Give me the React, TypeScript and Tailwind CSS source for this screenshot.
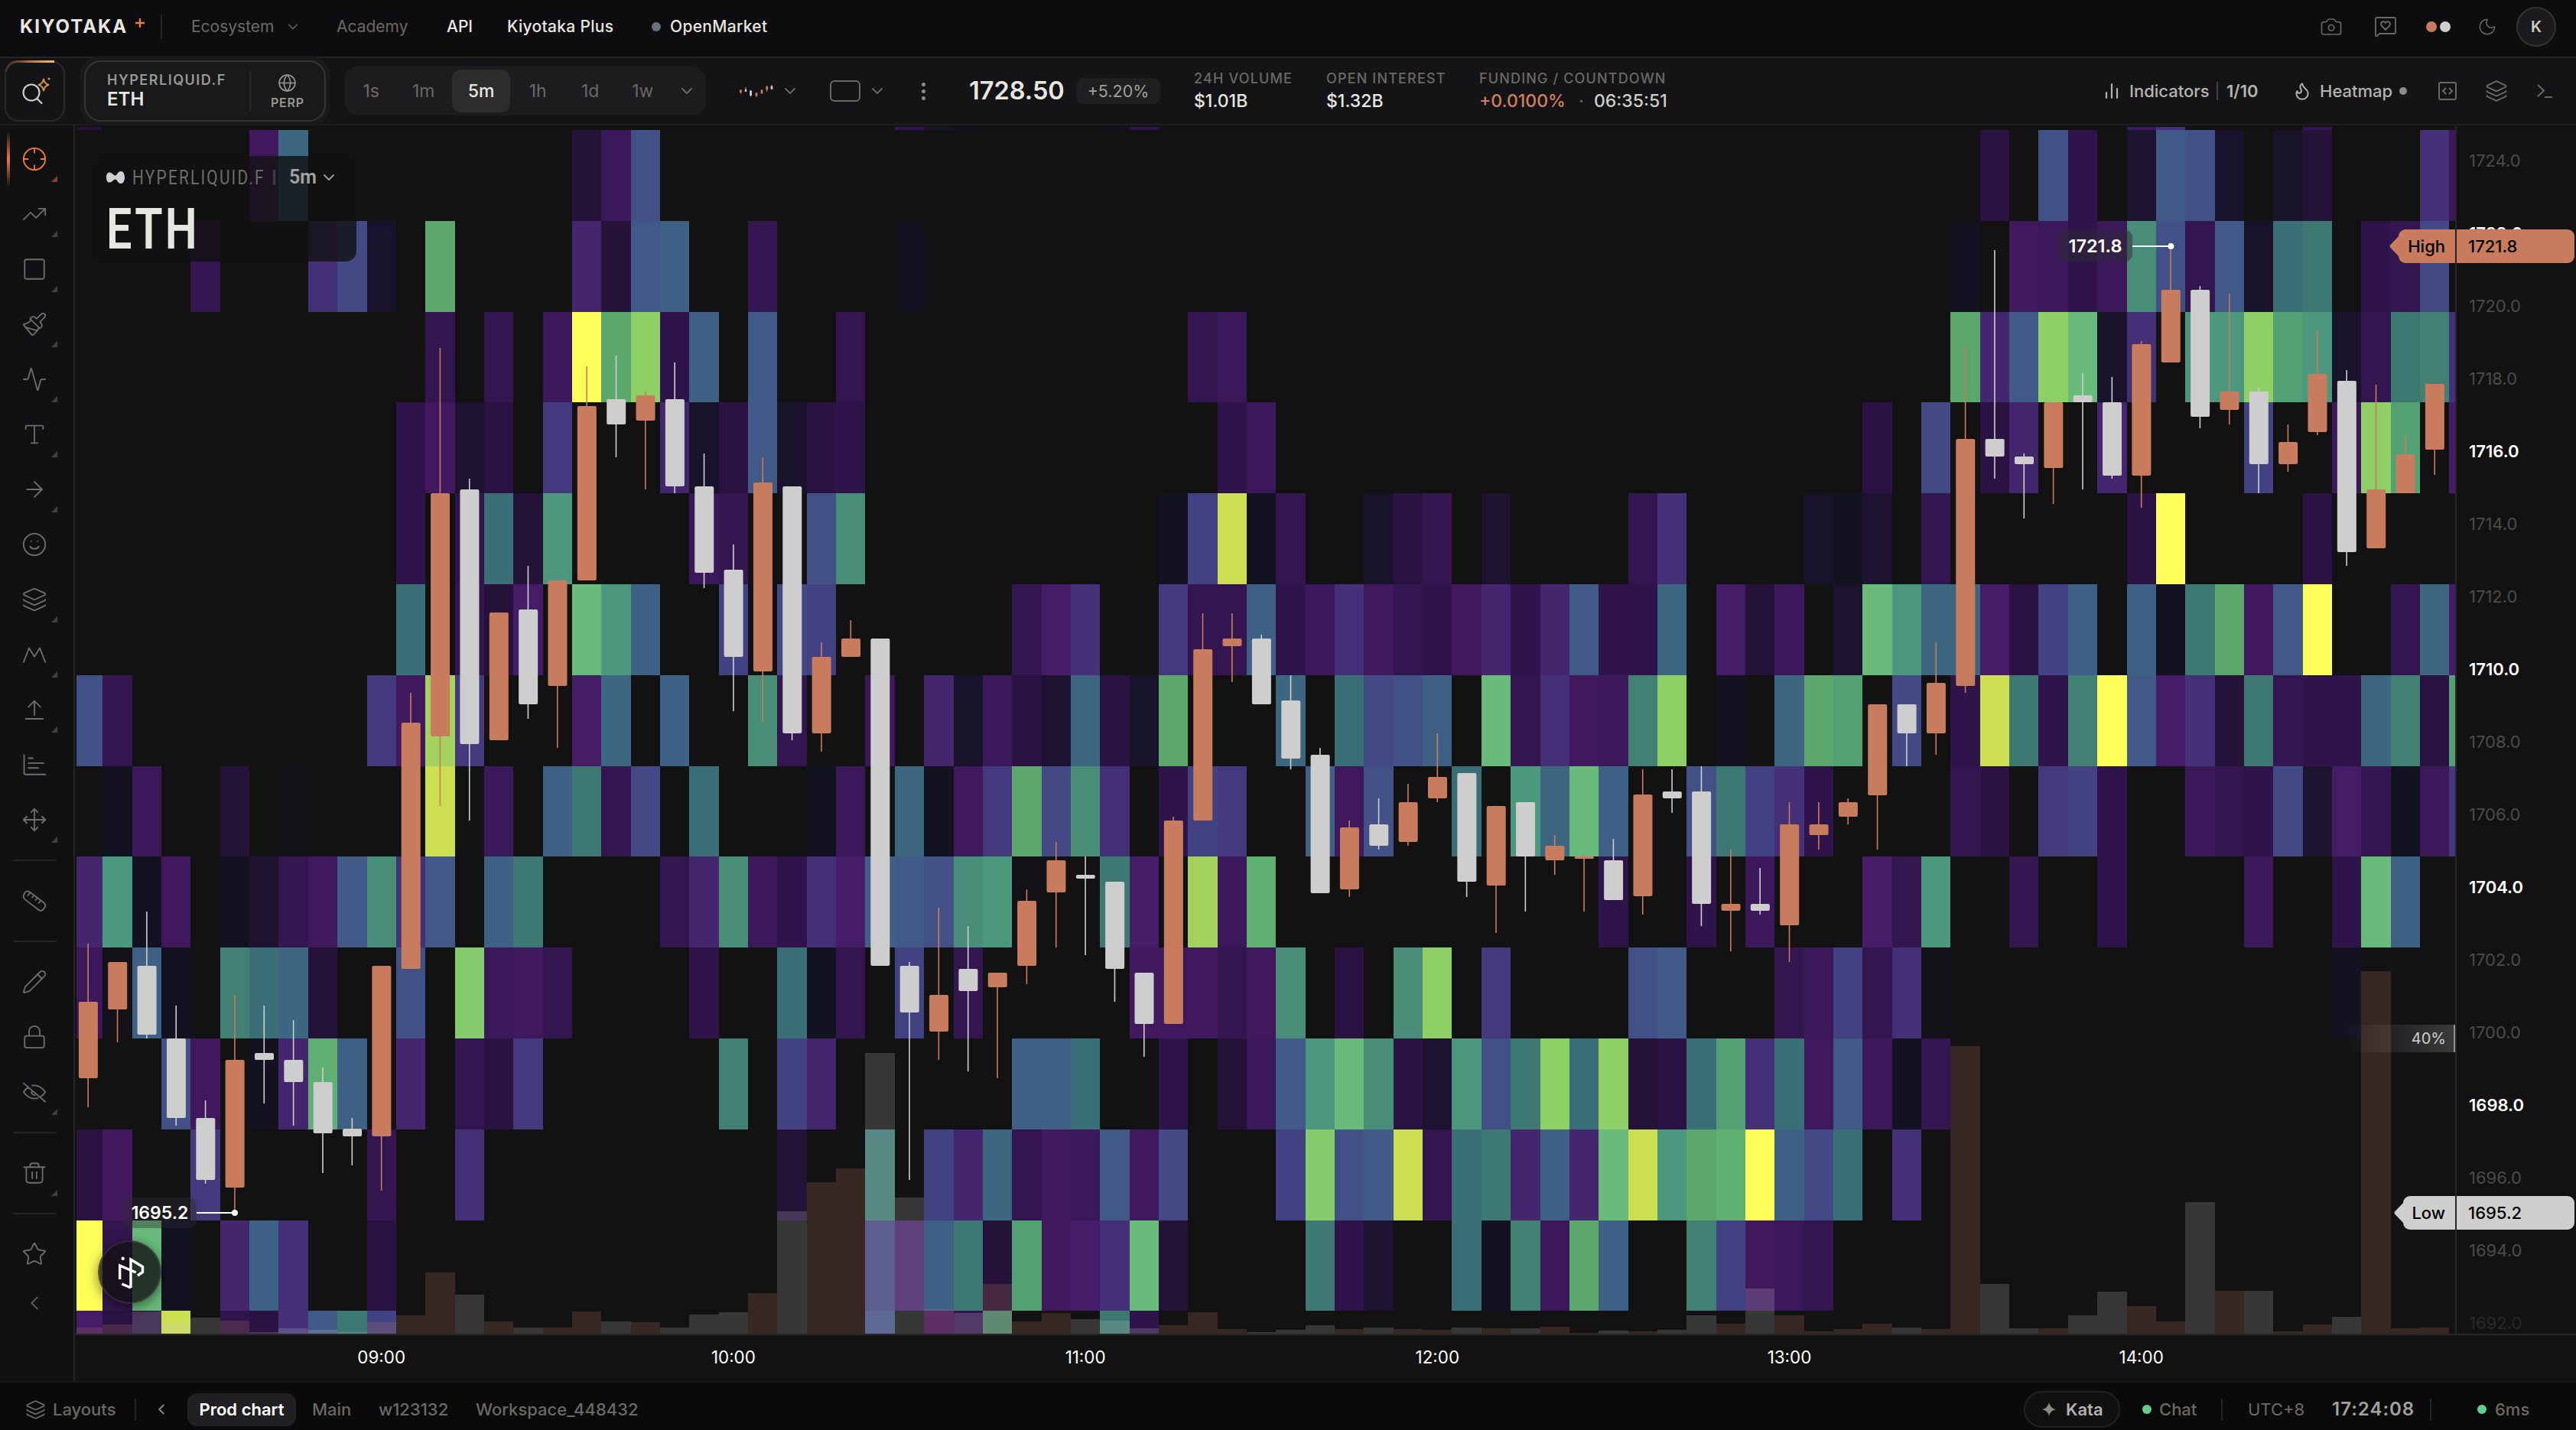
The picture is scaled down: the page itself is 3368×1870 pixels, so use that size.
import type { ReactNode } from 'react';
import {
  Activity,
  ArrowRight,
  Camera,
  ChevronDown,
  ChevronLeft,
  Crosshair,
  Flame,
  Globe,
  Layers,
  Lock,
  Moon,
  Move,
  Paintbrush,
  Pencil,
  Smile,
  Square,
  Star,
  TrendingUp,
  Type,
} from 'lucide-react';

// ---------- chart data ----------

const COL = 38.35;
const LEFT = 96;
const BOTTOM = 1744;

const colX = (i: number) => Math.round(LEFT + COL * i);
const midX = (i: number) => 115.2 + COL * i;
const priceY = (price: number) => 209.5 + (1724 - price) * 47.53;

// heatmap intensity, from the weakest to the strongest
const HEAT: Record<string, string> = {
  '-': '#131219', a: '#131221', b: '#18122a', c: '#1d1230', d: '#241239', e: '#2a1343', f: '#2e144a', g: '#33164f',
  h: '#3b185a', i: '#40185e', j: '#441c68', k: '#44266f', l: '#443077', m: '#43397c', n: '#424181', o: '#424984',
  p: '#415185', q: '#405986', r: '#3e6084', s: '#3d6780', t: '#3b6f77', u: '#3d7872', v: '#428074', w: '#478d78',
  x: '#4c987e', y: '#54a075', z: '#5ca76c', A: '#60b074', B: '#69bb7b', C: '#84cb6b', D: '#8fd066', E: '#a4d25e',
  F: '#cbdf50', G: '#ffff5a',
};

// each row: start column followed by one letter per column
const HEAT_ROWS: [number, number, string][] = [
  [166, 170, '0d 28gba 35af 70il 76g'],
  [170, 289, '6is 17dhp 65e 67pf 70cqpb.bd 80lh'],
  [289, 408, '4g 8lob.z 17kdqr 23g 28a 64a.ihfhwpgqbtu.fgo'],
  [408, 526, '12g.g.hGzDfr.q..g 38gh 64zkqDBbl.xxDyxbguvl'],
  [526, 645, '11fice.m...kbeqbef 39fh 61e.o.ek..k....n..hDy.j'],
  [645, 764, '11f.ftdx....hg..pw 37anFag..beg.c....gl....bac.g......eG....e'],
  [764, 883, '11t.gdj.Bxr..n.on 32gjl..mggrfhligfikfkqffs.jdh.cBxssjenr.rauziqG..gsj'],
  [883, 1002, '0pg 10miEm...js.r..wg..h.kbhecsebz...s.topr.BglihvD.a.szy.o.fFufvGqjldugffsvey'],
  [1002, 1120, '1ah..d.-....F.h.rugo.t...ah.saimzowl.fnm..rip..t.xsBr..punlf....ge.mnf..hgfocjgahm'],
  [1120, 1239, '0kxai.acgiqwlq.ru....gkwhfljrqpwx-..uj.EhA 52f..f.h...jgx..g..f....h..fBr'],
  [1239, 1358, '0h-ra.vtsd..p.Chig....f..tag.n.g.....iiigiw.e.wD.m....pq...ghngl- 77a'],
  [1358, 1477, '3pi.akAr.k.gem......v.nk......rrt..f.dhqxBwecxpuDtDdetyltiqhag'],
  [1477, 1596, '0ei..m.....g..l 24d..u.nksgihqio...nCpqFgtukrkBFxzAGrot.l'],
  [1596, 1714, '0GgBa.krl..e 27njrudyijlBd....ufc..tavhzr..vnihg'],
  [1714, 1744, '0jeeF.felqun 27p.jgw...uf'],
];

// [direction, high, body top, body bottom, low, top of the volume bar], in chart pixels
type Candle = ['u' | 'd', number, number, number, number, number];

const CANDLES: Candle[] = [
  ['u', 1234, 1310, 1410, 1448, 1736], ['u', 1258, 1258, 1320, 1363, 1732], ['d', 1192, 1263, 1353, 1358, 1715],
  ['d', 1315, 1358, 1462, 1472, 1730], ['d', 1439, 1462, 1543, 1548, 1723], ['u', 1301, 1386, 1553, 1586, 1727],
  ['d', 1315, 1377, 1386, 1443, 1742], ['d', 1334, 1386, 1415, 1472, 1737], ['d', 1396, 1415, 1482, 1534, 1739],
  ['d', 1462, 1476, 1486, 1524, 1742], ['u', 1263, 1263, 1486, 1557, 1729], ['u', 906, 945, 1267, 1267, 1720],
  ['u', 455, 645, 963, 1054, 1664], ['d', 626, 640, 973, 1073, 1693], ['u', 801, 801, 968, 968, 1728],
  ['d', 740, 797, 921, 940, 1736], ['u', 759, 759, 897, 978, 1736], ['u', 479, 531, 759, 759, 1715],
  ['d', 465, 522, 555, 598, 1728], ['u', 512, 517, 550, 640, 1729], ['d', 474, 522, 636, 645, 1736],
  ['d', 593, 636, 749, 769, 1719], ['d', 712, 745, 859, 930, 1716], ['u', 598, 631, 878, 944, 1691],
  ['d', 636, 636, 959, 968, 1584], ['u', 840, 859, 959, 983, 1546], ['u', 811, 835, 859, 859, 1528],
  ['d', 835, 835, 1263, 1263, 1377], ['d', 1258, 1263, 1324, 1543, 1566], ['u', 1187, 1301, 1349, 1386, 1712],
  ['d', 1211, 1267, 1296, 1401, 1717], ['u', 1272, 1272, 1291, 1410, 1679], ['u', 1163, 1178, 1263, 1287, 1728],
  ['u', 1101, 1125, 1167, 1239, 1717], ['d', 1120, 1144, 1149, 1249, 1725], ['d', 1153, 1153, 1267, 1310, 1727],
  ['d', 1272, 1272, 1339, 1382, 1737], ['u', 1068, 1073, 1339, 1339, 1733], ['u', 802, 849, 1073, 1073, 1716],
  ['u', 802, 835, 845, 892, 1738], ['d', 830, 835, 921, 921, 1742], ['d', 883, 916, 992, 1006, 1739],
  ['d', 978, 987, 1168, 1168, 1733], ['u', 1073, 1082, 1163, 1173, 1738], ['d', 1044, 1078, 1106, 1111, 1736],
  ['u', 1025, 1049, 1101, 1106, 1738], ['u', 959, 1016, 1044, 1049, 1739], ['d', 1011, 1011, 1153, 1173, 1736],
  ['u', 1054, 1054, 1158, 1220, 1737], ['d', 1049, 1049, 1120, 1192, 1737], ['u', 1092, 1106, 1125, 1144, 1735],
  ['u', 1118, 1120, 1123, 1192, 1743], ['d', 1097, 1125, 1177, 1177, 1740], ['u', 1006, 1039, 1172, 1196, 1741],
  ['d', 1006, 1035, 1044, 1063, 1739], ['d', 1002, 1035, 1182, 1211, 1720], ['u', 1111, 1182, 1191, 1244, 1731],
  ['d', 1135, 1182, 1191, 1196, 1685], ['u', 1049, 1078, 1210, 1258, 1720], ['u', 1049, 1078, 1092, 1111, 1741],
  ['u', 1044, 1049, 1068, 1078, 1738], ['u', 921, 921, 1040, 1111, 1731], ['d', 921, 921, 959, 1002, 1736],
  ['u', 840, 893, 959, 987, 1738], ['u', 454, 574, 897, 906, 1368], ['d', 327, 574, 597, 626, 1679],
  ['d', 593, 597, 607, 678, 1737], ['u', 526, 526, 612, 659, 1737], ['d', 488, 517, 526, 640, 1720],
  ['d', 493, 526, 622, 626, 1689], ['u', 446, 450, 622, 664, 1708], ['u', 322, 379, 474, 474, 1728],
  ['d', 374, 379, 545, 560, 1572], ['u', 384, 512, 536, 555, 1688], ['d', 507, 512, 607, 645, 1688],
  ['u', 555, 578, 607, 617, 1741], ['u', 431, 489, 565, 569, 1732], ['d', 484, 498, 722, 740, 1722],
  ['u', 503, 640, 717, 717, 1270], ['u', 569, 594, 645, 645, 1737], ['u', 502, 502, 588, 621, 1736],
];

const PRICES = [1724, 1722, 1720, 1718, 1716, 1714, 1712, 1710, 1708, 1706, 1704, 1702, 1700, 1698, 1696, 1694, 1692];
const HOURS = ['09:00', '10:00', '11:00', '12:00', '13:00', '14:00'];

const heatCells = HEAT_ROWS.flatMap(([top, bottom, row]) =>
  row.split(' ').flatMap((run) => {
    const start = parseInt(run, 10);
    const letters = run.replace(/^\d+/, '');
    return [...letters].map((letter, i) => ({ top, bottom, col: start + i, letter })).filter((c) => c.letter !== '.');
  }),
);

// ---------- chart ----------

const priceColor = (price: number) => {
  if (price === 1692) return '#29292a';
  return (price - 1692) % 6 === 0 ? '#ffffff' : '#4b4b4c';
};

const ChartCanvas = () => (
  <svg className="block h-[1642px] w-[3270px]" viewBox="98 164 3270 1642" fontFamily="Inter, sans-serif">
    {heatCells.map(({ top, bottom, col, letter }) => {
      const x = Math.max(colX(col), 100);
      const right = Math.min(colX(col + 1), 3210);
      return (
        <rect
          key={`${top}-${col}`}
          x={x}
          y={top}
          width={right - x}
          height={bottom - top}
          fill={HEAT[letter]}
          shapeRendering="crispEdges"
        />
      );
    })}

    {/* Volume */}
    {CANDLES.map(([dir, , , , , top], i) => {
      const x = Math.max(colX(i), 100);
      return (
        <rect
          key={i}
          x={x}
          y={top}
          width={colX(i + 1) - x}
          height={BOTTOM - top}
          fill={dir === 'u' ? '#c97c5d' : '#cecece'}
          fillOpacity={0.2}
        />
      );
    })}

    {/* Candles */}
    {CANDLES.map(([dir, high, top, bottom, low], i) => {
      const color = dir === 'u' ? '#c97c5d' : '#cecece';
      return (
        <g key={i} fill={color}>
          <rect x={midX(i) - 0.8} y={high} width={1.6} height={low - high} />
          <rect x={midX(i) - 12.3} y={top} width={25} height={bottom - top} rx={bottom - top > 4 ? 2 : 1} />
        </g>
      );
    })}

    {/* Extremes */}
    <g stroke="#ffffff" strokeWidth={2} fill="#ffffff">
      <path d="M2788 322H2838M257 1586H307" />
      <circle cx={2838.4} cy={322} r={3} />
      <circle cx={307} cy={1586} r={3} />
    </g>

    {/* Axes */}
    <path d="M3211 166V1745M98 1745H3368" stroke="#262628" strokeWidth={2} fill="none" />
    {PRICES.map((price) => (
      <text
        key={price}
        x={3228}
        y={priceY(price) + 8}
        fontSize={22}
        fontWeight={priceColor(price) === '#ffffff' || price === 1722 ? 600 : 400}
        fill={price === 1722 ? '#ffffff' : priceColor(price)}
      >
        {price.toFixed(1)}
      </text>
    ))}
    {HOURS.map((hour, i) => (
      <text key={hour} x={498.7 + i * COL * 12} y={1783} fontSize={22.4} fontWeight={400} fill="#ffffff" textAnchor="middle">
        {hour}
      </text>
    ))}
  </svg>
);

const ChartLegend = () => (
  <div className="absolute left-[27px] top-[40px] h-[138px] w-[341px] rounded-[14px] bg-[#121213]/80 pl-[14px] pt-[12px] font-['Roboto',sans-serif]">
    <div className="flex h-[32px] items-center">
      <svg className="h-[18px] w-[24px]" viewBox="0 0 24 18" fill="#cfcfcf">
        <path d="M0 9c0-4 1.500-6.500 4-6.500 4 0 5 4 8 4 2 0 3-5.500 7-5.500 3 0 5 3.500 5 8s-2 8-5 8c-4 0-5-5.500-7-5.500-3 0-4 4-8 4-2.500 0-4-2.500-4-6.500z" />
      </svg>
      <span className="ml-[10px] w-[184px] whitespace-nowrap">
        <span className="inline-block origin-left scale-x-[0.8] text-[26px] tracking-[2.8px] text-[#6f6d69]">HYPERLIQUID.F</span>
      </span>
      <span className="h-[20px] w-[3px] bg-[#3f3e3d]" />
      <span className="ml-[18px] text-[25px] font-semibold text-[#a5a39e]">5m</span>
      <ChevronDown className="ml-[4px] text-[#a5a39e]" size={24} strokeWidth={1.8} />
    </div>
    <div className="mt-[25px] origin-left scale-x-[0.79] text-[75px] font-semibold leading-[52px] tracking-[4px] text-[#e8e6e1]">ETH</div>
  </div>
);

interface TagProps {
  label: string;
  price: string;
  className: string;
  labelClassName: string;
}

const PriceTag = ({ label, price, className, labelClassName }: TagProps) => (
  <div className={`absolute flex h-[44px] items-center rounded-[9px] text-[22px] font-medium text-black ${className}`}>
    <svg className="absolute -left-[12px] h-[28px] w-[13px]" viewBox="0 0 13 28" fill="currentColor">
      <path className={labelClassName} d="M13 0v28L1 15.500q-1-1.500 0-3z" />
    </svg>
    <span className="flex-1 pr-[13px] text-right">{label}</span>
    <span className="h-full w-[2px] bg-[#262628]" />
    <span className="w-[154px] pl-[15px]">{price}</span>
  </div>
);

const Chart = () => (
  <main className="relative flex-1 overflow-hidden bg-[#121213]">
    <ChartCanvas />
    <ChartLegend />

    <div className="absolute left-[2593px] top-[137px] flex h-[41px] w-[97px] items-center justify-center rounded-[9px] bg-[#2e2a33]/50 text-[23.500px] font-semibold text-white">
      1721.8
    </div>
    <div className="absolute left-[61px] top-[1402px] flex h-[40px] w-[98px] items-center justify-center rounded-[9px] bg-[#2e2a33]/40 pl-[2px] text-[23px] font-semibold text-white">
      1695.2
    </div>

    <PriceTag label="High" price="1721.8" className="left-[3038px] top-[136px] w-[230px] bg-[#c97c5d]" labelClassName="fill-[#c97c5d]" />
    <PriceTag label="Low" price="1695.2" className="left-[3044px] top-[1400px] w-[224px] bg-[#cfcfcf]" labelClassName="fill-[#cfcfcf]" />

    <div className="absolute left-[2968px] top-[1176px] flex h-[36px] w-[144px] items-center justify-end rounded-l-[8px] border-r-2 border-[#8d8d8d] bg-linear-to-r from-white/0 to-white/17 pr-[10px] text-[20px] text-[#cfcfcf]">
      40%
    </div>

    {/* Assistant button */}
    <div className="absolute left-[30px] top-[1458px] flex h-[83px] w-[83px] items-center justify-center rounded-full border-2 border-white/10 bg-[#121213]/80 shadow-[0_4px_16px_rgba(0,0,0,0.5)]">
      <svg className="h-[46px] w-[40px]" viewBox="-2 -1 40 46" fill="none" stroke="#ffffff" strokeWidth="3.400">
        <path d="M4.700 31V13l21 9M19 42V5l15.500 9.500v7L28 26M7.400 37L19 42" />
        <circle cx="8.700" cy="3.700" r="2.200" fill="#ffffff" stroke="none" />
      </svg>
    </div>
  </main>
);

// ---------- header ----------

const NavBar = () => (
  <header className="flex h-[76px] shrink-0 items-center border-b-2 border-[#252527] bg-[#0d0d0f] pb-[4px] pl-[26px] pr-[26px] text-[21px] font-medium text-[#e8e6e1]">
    <div className="w-[151px] whitespace-nowrap text-[24px] font-bold tracking-[2px]">KIYOTAKA</div>
    <svg className="mb-[11px] h-[12px] w-[12px]" viewBox="0 0 12 12" stroke="#f07a35" strokeWidth="2.400">
      <path d="M6 0v12M0 6h12" />
    </svg>
    <span className="ml-[21px] h-[32px] w-[2px] bg-[#252527]" />
    <nav className="ml-[38px] flex items-center whitespace-nowrap">
      <div className="flex w-[190px] items-center font-normal text-[#6b6964]">
        <span className="w-[122px]">Ecosystem</span>
        <ChevronDown size={22} strokeWidth={1.6} />
      </div>
      <span className="w-[144px] font-normal text-[#6b6964]">Academy</span>
      <span className="w-[79px]">API</span>
      <span className="w-[189px] tracking-[0.3px]">Kiyotaka Plus</span>
      <span className="mr-[12px] h-[12px] w-[12px] rounded-full bg-[#6b7080]" />
      <span className="tracking-[0.3px]">OpenMarket</span>
    </nav>
    <div className="ml-auto flex items-center text-[#6b6964]">
      <Camera size={30} strokeWidth={1.3} />
      <svg className="ml-[41px] h-[28px] w-[30px]" viewBox="0 0 30 28" fill="none" stroke="currentColor" strokeWidth="1.800">
        <path d="M2 25V4q0-2 2-2h22q2 0 2 2v17q0 2-2 2H7l-3 3q-2 1-2-1z" />
        <path d="M15 18l-5-5q-2-3 0-5 3-2 5 1 2-3 5-1 2 2 0 5z" />
      </svg>
      <span className="ml-[38px] h-[14px] w-[14px] rounded-full bg-[#c97c5d]" />
      <span className="ml-[4px] h-[14px] w-[14px] rounded-full bg-[#cfcfcf]" />
      <Moon className="ml-[35px]" size={26} strokeWidth={1.4} />
      <div className="ml-[25px] flex h-[52px] w-[52px] items-center justify-center rounded-full border-2 border-[#333335] bg-[#1b1b1d] text-[20px] font-semibold text-[#cfcdc8]">
        K
      </div>
    </div>
  </header>
);

const TIMEFRAMES = ['1s', '1m', '5m', '1h', '1d', '1w'];

const Stat = ({ label, className, children }: { label: string; className: string; children: ReactNode }) => (
  <div className={`flex flex-col gap-[4px] whitespace-nowrap ${className}`}>
    <span className="text-[18px] font-medium leading-[22px] tracking-[1.150px] text-[#6b6964]">{label}</span>
    <span className="text-[23px] font-medium leading-[28px] text-[#e8e6e1]">{children}</span>
  </div>
);

const Toolbar = () => (
  <div className="flex h-[88px] shrink-0 items-center border-b-2 border-[#1e1e20] bg-[#141416] pl-[6px] pr-[30px]">
    <div className="relative flex h-[80px] w-[79px] items-center justify-center rounded-[18px] border-2 border-[#2a2a2c]">
      <svg className="absolute -left-[2px] -top-[2px] h-[20px] w-[68px]" viewBox="0 0 68 20" fill="none">
        <defs>
          <linearGradient id="edge" x1="0" x2="1">
            <stop offset="0" stopColor="#7a4a2c" stopOpacity="0.3" />
            <stop offset="0.500" stopColor="#b87440" />
            <stop offset="1" stopColor="#f6bd6c" />
          </linearGradient>
        </defs>
        <path d="M2 14Q5 1.500 18 1.500H65" stroke="url(#edge)" strokeWidth="3" />
      </svg>
      <svg className="ml-[2px] h-[40px] w-[44px]" viewBox="0 0 44 40" fill="none" strokeWidth="2.200">
        <circle cx="16" cy="22" r="10.500" stroke="#cfcdc8" />
        <path d="M23.500 30l6 6" stroke="#cfcdc8" strokeLinecap="round" />
        <path d="M32 4q1 7 7 8-6 1-7 8-1-7-7-8 6-1 7-8z" stroke="#d39a45" strokeWidth="1.800" fill="#141416" />
        <circle cx="39" cy="4" r="1.500" fill="#d39a45" />
      </svg>
    </div>

    <div className="ml-[25px] flex h-[80px] w-[316px] items-center rounded-[22px] border-2 border-[#353537] bg-[#19191b] pl-[28px] ring-6 ring-[#19191a]">
      <div className="flex w-[186px] flex-col">
        <span className="text-[18px] font-semibold leading-[22px] tracking-[1.5px] text-[#9a9893]">HYPERLIQUID.F</span>
        <span className="text-[24px] font-semibold leading-[28px] text-[#e8e6e1]">ETH</span>
      </div>
      <span className="h-[52px] w-[2px] bg-[#2a2a2c]" />
      <div className="ml-[26px] flex flex-col items-center gap-[4px] text-[#9a9893]">
        <Globe size={25} strokeWidth={1.5} />
        <span className="text-[16px] font-semibold leading-[18px] tracking-[0.8px]">PERP</span>
      </div>
    </div>

    <div className="ml-[24px] flex h-[64px] w-[473px] items-center rounded-[18px] bg-[#1c1c1e] pl-[1px] text-[23px] text-[#6b6964]">
      {TIMEFRAMES.map((tf) => (
        <span
          key={tf}
          className={
            tf === '5m'
              ? 'ml-[3px] mr-[2px] flex h-[56px] w-[76px] items-center justify-center rounded-[12px] bg-[#2c2c2d] font-medium text-[#e8e6e1]'
              : 'flex w-[68.500px] items-center justify-center'
          }
        >
          {tf}
        </span>
      ))}
      <ChevronDown className="ml-[11px]" size={24} strokeWidth={1.8} />
    </div>

    <svg className="ml-[42px] h-[20px] w-[48px]" viewBox="0 0 48 20">
      <path d="M3.400 8v6M24 12v6M31 8v6M37.700 3v8" stroke="#c97c5d" strokeWidth="1" />
      <path d="M2 8.500h2.800V12H2zM22.600 12.500h2.800v4h-2.800zM29.600 8.500h2.800V13h-2.800zM36.300 4h2.800v4.500h-2.800z" fill="#c97c5d" />
      <path d="M10 5.300V11M16.600 9v8.300M44 2v6" stroke="#cfcfcf" strokeWidth="1" />
      <path d="M8.800 8h2.400v3H8.800zM15.200 9.500H18V16h-2.800zM42.600 4h2.800v3.500h-2.800z" fill="#cfcfcf" />
    </svg>
    <ChevronDown className="ml-[8px] text-[#6b6964]" size={24} strokeWidth={1.8} />
    <span className="ml-[40px] h-[28px] w-[40px] rounded-[6px] border-2 border-[#6b6964]" />
    <ChevronDown className="ml-[10px] text-[#6b6964]" size={24} strokeWidth={1.8} />
    <div className="ml-[46px] flex flex-col gap-[4px]">
      <span className="h-[5px] w-[5px] rounded-full bg-[#8d8b86]" />
      <span className="h-[5px] w-[5px] rounded-full bg-[#8d8b86]" />
      <span className="h-[5px] w-[5px] rounded-full bg-[#8d8b86]" />
    </div>

    <span className="ml-[57px] w-[140px] text-[32.500px] font-semibold text-[#e8e6e1]">1728.50</span>
    <span className="flex h-[34px] w-[110px] items-center justify-center rounded-[9px] bg-[#1f1f21] text-[21.500px] text-[#a09e99]">+5.20%</span>

    <Stat label="24H VOLUME" className="ml-[44px] w-[173px]">$1.01B</Stat>
    <Stat label="OPEN INTEREST" className="w-[200px]">$1.32B</Stat>
    <Stat label="FUNDING / COUNTDOWN" className="w-[260px]">
      <span className="inline-block w-[130px] text-[#d07f60]">+0.0100%</span>
      <span className="inline-block w-[20px] text-[#6b6964]">·</span>
      <span className="text-[#cfcdc8]">06:35:51</span>
    </Stat>

    <div className="ml-auto flex items-center whitespace-nowrap text-[22px] font-medium text-[#b5b3ae]">
      <svg className="h-[22px] w-[20px]" viewBox="0 0 20 22" stroke="currentColor" strokeWidth="2.200" strokeLinecap="round">
        <path d="M3 13v7M10 2v18M17 8v12" />
      </svg>
      <span className="ml-[13px] w-[114px]">Indicators</span>
      <span className="h-[24px] w-[2px] bg-[#3f3f41]" />
      <span className="ml-[11px] w-[86px] font-semibold">1/10</span>
      <Flame size={26} strokeWidth={1.8} />
      <span className="ml-[10px] w-[104px]">Heatmap</span>
      <span className="h-[10px] w-[10px] rounded-full bg-[#8d8b86]" />
      <svg className="ml-[40px] h-[26px] w-[26px] text-[#6b6964]" viewBox="0 0 26 26" fill="none" stroke="currentColor" strokeWidth="2">
        <rect x="2" y="2" width="22" height="22" rx="2" />
        <path d="M11 9l-4 4 4 4M15 9l4 4-4 4" />
      </svg>
      <Layers className="ml-[36px] text-[#6b6964]" size={30} strokeWidth={1.5} />
      <svg className="ml-[37px] h-[20px] w-[22px] text-[#6b6964]" viewBox="0 0 22 20" fill="none" stroke="currentColor" strokeWidth="2">
        <path d="M2 2l8 7.500L2 17M11 18h10" />
      </svg>
    </div>
  </div>
);

// ---------- left toolbar ----------

const line = { fill: 'none', stroke: 'currentColor', strokeWidth: 1.3, strokeLinecap: 'round', strokeLinejoin: 'round' } as const;

const Glyph = ({ children }: { children: ReactNode }) => (
  <svg className="h-[34px] w-[34px]" viewBox="0 0 24 24" {...line}>
    {children}
  </svg>
);

const Tool = ({ children, more, active }: { children: ReactNode; more?: boolean; active?: boolean }) => (
  <div
    className={`relative flex h-[72px] w-full shrink-0 items-center justify-center pr-[6px] ${active ? 'text-[#f07a35]' : 'text-[#6f6d69]'}`}
  >
    {active && <span className="absolute left-[9px] top-0 h-full w-[4px] bg-linear-to-b from-transparent via-[#f07a35] to-transparent" />}
    {children}
    {more && (
      <svg className="absolute bottom-[6px] right-[21px] h-[8px] w-[8px] opacity-50" viewBox="0 0 8 8" fill="currentColor">
        <path d="M8 0v8H0z" />
      </svg>
    )}
  </div>
);

const Divider = () => <span className="my-[16px] ml-[17px] h-[2px] w-[56px] shrink-0 self-start bg-[#252527]" />;

const SideBar = () => (
  <aside className="flex w-[98px] shrink-0 flex-col items-center border-r-2 border-[#252527] bg-[#111113] pt-[8px]">
    <Tool more active><Crosshair size={34} strokeWidth={1.3} /></Tool>
    <Tool more><TrendingUp size={34} strokeWidth={1.3} /></Tool>
    <Tool more><Square size={34} strokeWidth={1.3} /></Tool>
    <Tool more><Paintbrush size={34} strokeWidth={1.3} /></Tool>
    <Tool more><Activity size={34} strokeWidth={1.3} /></Tool>
    <Tool more><Type size={34} strokeWidth={1.3} /></Tool>
    <Tool more><ArrowRight size={34} strokeWidth={1.3} /></Tool>
    <Tool><Smile size={34} strokeWidth={1.3} /></Tool>
    <Tool more><Layers size={34} strokeWidth={1.3} /></Tool>
    <Tool more>
      <Glyph><path d="M2 19L7 6l5 8 5-8 5 13" /></Glyph>
    </Tool>
    <Tool more>
      <Glyph><path d="M12 17V4M6.500 9.500L12 4l5.500 5.500M4 20.500h16" /></Glyph>
    </Tool>
    <Tool>
      <Glyph><path d="M2.500 3v16.500q0 1.500 1.500 1.500h18M6.500 6h4M6.500 10.500h14M6.500 15h9" /></Glyph>
    </Tool>
    <Tool more><Move size={34} strokeWidth={1.3} /></Tool>
    <Divider />
    <Tool>
      <Glyph>
        <path d="M3 4.500Q5 2 8 4l13 10q2 2 .5 4l-1.500 2q-2 2-4 .5L3 10.500Q1 8.500 2.500 6zM8 4.500l-2 2.500M11.500 7l-1.500 2M14.500 9.500l-1.500 2M17.500 12l-1.500 2" />
      </Glyph>
    </Tool>
    <Divider />
    <Tool><Pencil size={34} strokeWidth={1.3} /></Tool>
    <Tool><Lock size={34} strokeWidth={1.3} /></Tool>
    <Tool more>
      <Glyph><path d="M2 4l20 17M10 6q7-1 12 6-1.500 2.500-4 4.300M6.500 7.500Q3.500 9.500 2 12q5 7.500 13 5.800M9.500 10.500q-1 4 3 4.500" /></Glyph>
    </Tool>
    <Divider />
    <Tool more>
      <Glyph><path d="M2.500 6.500h19M4.500 6.500V18q0 3 3 3h9q3 0 3-3V6.500M8 6V5q0-2 2-2h4q2 0 2 2v1M10 11v6M14 11v6" /></Glyph>
    </Tool>
    <Divider />
    <Tool><Star size={34} strokeWidth={1.3} /></Tool>
    <div className="flex h-[56px] items-center pr-[6px] text-[#6f6d69]">
      <ChevronLeft size={30} strokeWidth={1.4} />
    </div>
  </aside>
);

// ---------- footer ----------

const Footer = () => (
  <footer className="flex h-[64px] shrink-0 items-center whitespace-nowrap border-t-2 border-[#19191b] bg-[#0a0a0b] pb-[2px] pl-[33px] pr-[62px] pt-[10px] text-[22px] font-medium text-[#6b6964]">
    <Layers size={27} strokeWidth={1.6} />
    <span className="ml-[9px] w-[107px]">Layouts</span>
    <span className="h-[28px] w-[2px] bg-[#252527]" />
    <ChevronLeft className="ml-[22px] text-[#8d8b86]" size={22} strokeWidth={2} />
    <span className="ml-[23px] flex h-[43px] w-[142px] items-center justify-center rounded-[12px] bg-[#202022] font-semibold text-white">Prod chart</span>
    <span className="ml-[21px] w-[87px]">Main</span>
    <span className="w-[127px]">w123132</span>
    <span>Workspace_448432</span>

    <div className="ml-auto flex items-center">
      <div className="flex h-[48px] w-[126px] items-center rounded-full border-2 border-[#222224] bg-[#101011] pl-[22px] font-semibold text-[#b5b3ae]">
        <svg className="mr-[13px] h-[18px] w-[18px]" viewBox="0 0 18 18" fill="#8d8b86">
          <path d="M9 0q1.500 7.500 9 9-7.500 1.500-9 9-1.500-7.500-9-9 7.500-1.500 9-9z" />
        </svg>
        Kata
      </div>
      <span className="ml-[29px] h-[12px] w-[12px] rounded-full bg-[#62cf8f]" />
      <span className="ml-[10px] w-[81px]">Chat</span>
      <span className="h-[28px] w-[2px] bg-[#252527]" />
      <span className="ml-[33px] w-[110px] font-normal">UTC+8</span>
      <span className="w-[128px] text-[24px] font-semibold tracking-[1px] text-[#a3a19c]">17:24:08</span>
      <span className="h-[28px] w-[2px] bg-[#252527]" />
      <span className="ml-[60px] h-[12px] w-[12px] rounded-full bg-[#62cf8f]" />
      <span className="ml-[11px] w-[44px]">6ms</span>
    </div>
  </footer>
);

export default function App() {
  return (
    <div className="flex h-[1870px] w-[3368px] flex-col overflow-hidden bg-[#121213] font-['Inter',sans-serif]">
      <NavBar />
      <Toolbar />
      <div className="flex h-[1642px] shrink-0">
        <SideBar />
        <Chart />
      </div>
      <Footer />
    </div>
  );
}
